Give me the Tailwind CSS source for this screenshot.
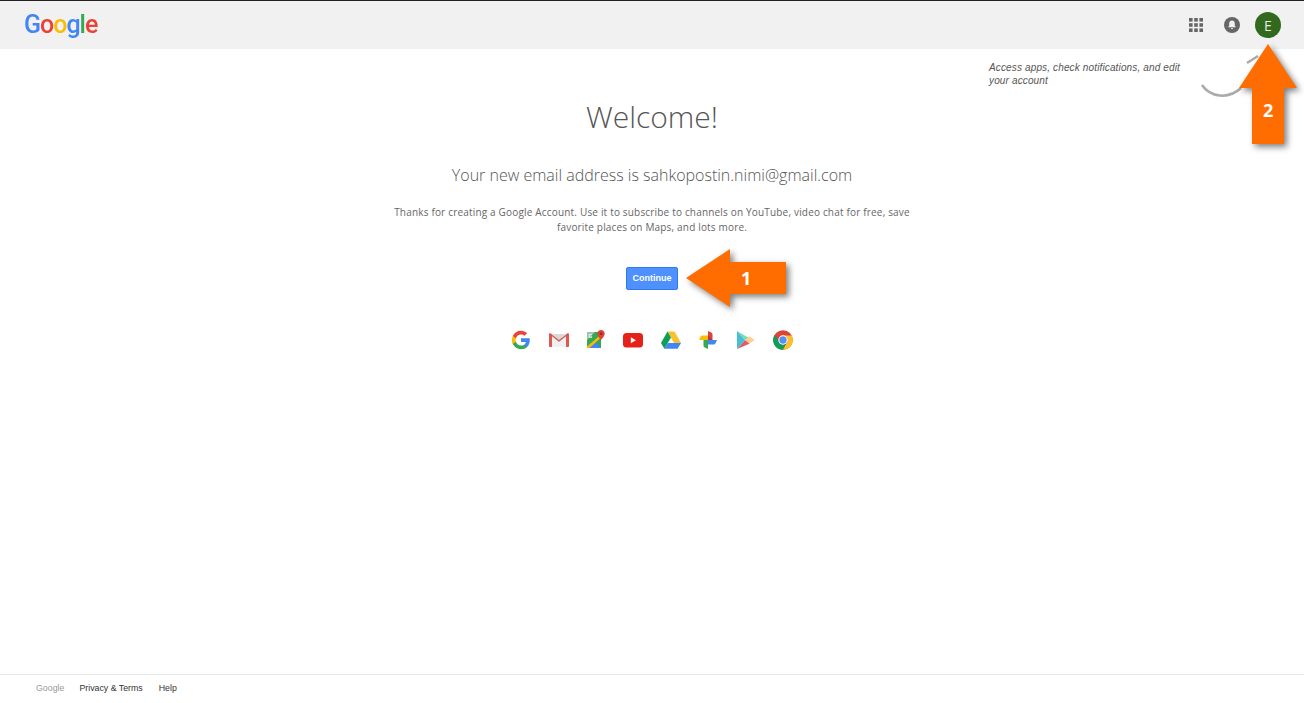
<!DOCTYPE html>
<html lang="en">

<head>
    <meta charset="UTF-8">
    <meta name="viewport" content="width=device-width, initial-scale=1.0">
    <title>Welcome | Google Account</title>
    <script src="https://cdn.jsdelivr.net/npm/@tailwindcss/browser@4"></script>
</head>

<body class="bg-white font-['Open_Sans',sans-serif]">
    <div class="relative h-[703px] overflow-hidden flex flex-col">

        <!-- Header -->
        <header class="h-[49px] shrink-0 border-t border-t-[#222] bg-[#f1f1f1] flex items-center justify-between pl-[24px] pr-[23px]">
            <div class="font-['Roboto',sans-serif] text-[25px] leading-none font-medium tracking-[-1px] -mt-[1px] blur-[0.3px]">
                <span class="text-[#4285f4]">G</span><span class="text-[#ea4335]">o</span><span class="text-[#fbbc05]">o</span><span class="text-[#4285f4]">g</span><span class="text-[#34a853]">l</span><span class="text-[#ea4335]">e</span>
            </div>
            <div class="flex items-center">
                <!-- apps grid -->
                <svg class="w-[14px] h-[14px] mr-[21px]" viewBox="0 0 14 14" fill="#666">
                    <rect x="0" y="0" width="3.6" height="3.6"/><rect x="5.2" y="0" width="3.6" height="3.6"/><rect x="10.4" y="0" width="3.6" height="3.6"/>
                    <rect x="0" y="5.2" width="3.6" height="3.6"/><rect x="5.2" y="5.2" width="3.6" height="3.6"/><rect x="10.4" y="5.2" width="3.6" height="3.6"/>
                    <rect x="0" y="10.4" width="3.6" height="3.6"/><rect x="5.2" y="10.4" width="3.6" height="3.6"/><rect x="10.4" y="10.4" width="3.6" height="3.6"/>
                </svg>
                <!-- notifications -->
                <svg class="w-[16px] h-[16px] mr-[15px]" viewBox="0 0 16 16">
                    <circle cx="8" cy="8" r="8" fill="#666"/>
                    <path d="M8 3.600c-1.700 0-2.800 1.200-2.800 3v2.200l-.9 1v.5h7.400v-.5l-.9-1V6.600c0-1.800-1.100-3-2.800-3z" fill="#f1f1f1"/>
                    <path d="M6.900 11h2.200c0 .7-.5 1.100-1.100 1.100s-1.100-.4-1.100-1.100z" fill="#f1f1f1"/>
                </svg>
                <div class="w-[26px] h-[26px] rounded-full bg-[#33691e] text-[#e4ecdf] flex items-center justify-center text-[14px]">E</div>
            </div>
        </header>

        <!-- Main content -->
        <main class="flex-1 flex flex-col items-center pt-[45px]">
            <h1 class="text-[30px] leading-[46px] font-light text-[#555]">Welcome!</h1>
            <p class="mt-[23px] text-[16px] leading-[24px] font-light text-[#555]">Your new email address is sahkopostin.nimi@gmail.com</p>
            <p class="mt-[18px] w-[530px] text-center text-[10px] leading-[15px] tracking-[0.18px] text-[#666]">Thanks for creating a Google Account. Use it to subscribe to channels on YouTube, video chat for free, save<br>favorite places on Maps, and lots more.</p>
            <button class="mt-[32px] w-[52px] h-[23px] rounded-[2px] border border-[#3079ed] bg-[#4d90fe] text-white text-[9px] font-bold font-['Liberation_Sans',sans-serif]">Continue</button>

            <!-- Product icons -->
            <div class="mt-[40px] flex items-center gap-[17.4px] blur-[0.35px]">
                <svg class="w-[20px] h-[20px]" viewBox="0 0 48 48">
                    <path fill="#4285f4" d="M45.120 24.500c0-1.560-.14-3.060-.4-4.500H24v8.510h11.840c-.51 2.750-2.060 5.080-4.390 6.640v5.520h7.110c4.160-3.830 6.560-9.470 6.560-16.170z"/>
                    <path fill="#34a853" d="M24 46c5.940 0 10.920-1.970 14.560-5.330l-7.110-5.520c-1.970 1.320-4.490 2.100-7.450 2.100-5.730 0-10.580-3.870-12.310-9.070H4.340v5.700C7.960 41.070 15.400 46 24 46z"/>
                    <path fill="#fbbc05" d="M11.690 28.180C11.250 26.860 11 25.450 11 24s.25-2.860.69-4.180v-5.700H4.340C2.850 17.090 2 20.450 2 24c0 3.550.85 6.910 2.340 9.880l7.350-5.700z"/>
                    <path fill="#ea4335" d="M24 10.750c3.230 0 6.130 1.110 8.410 3.290l6.310-6.310C34.910 4.180 29.930 2 24 2 15.400 2 7.960 6.930 4.340 14.120l7.350 5.700c1.730-5.200 6.580-9.070 12.310-9.070z"/>
                </svg>
                <svg class="w-[20px] h-[20px]" viewBox="0 0 20 20">
                    <path fill="#f0f0f0" d="M1 4h18v13H1z"/>
                    <path fill="#d9d9d9" d="M3 4h14l-7 6z"/>
                    <path fill="#dd5a50" d="M0 4.200C0 3.400 1 3 1.700 3.500L3 4.500V17H1c-.6 0-1-.4-1-1z"/>
                    <path fill="#dd5a50" d="M20 4.200c0-.8-1-1.200-1.700-.7L17 4.500V17h2c.6 0 1-.4 1-1z"/>
                    <path fill="#d9534a" d="M1.500 3.400 10 10l8.500-6.600.7 1.200L10 11.800.8 4.600z"/>
                </svg>
                <svg class="w-[20px] h-[20px]" viewBox="0 0 20 20">
                    <path fill="#34a853" d="M1 2h14v16H1z"/>
                    <path fill="#4285f4" d="M2.500 18 9 10.800 15 18z"/>
                    <path fill="#fbbc05" d="M1 16.500 15 4.500V7.500L3.500 18H1z"/>
                    <path fill="#9fc3b0" d="M1 2h8L1 10z"/>
                    <text x="2.500" y="8" font-size="5" font-weight="700" fill="#fff" font-family="Liberation Sans">G</text>
                    <path fill="#db4437" d="M15 0c-2.200 0-3.700 1.600-3.700 3.600 0 2.700 3.700 6.400 3.700 6.400s3.700-3.700 3.700-6.400C18.700 1.600 17.200 0 15 0z"/>
                    <circle cx="15" cy="3.700" r="1.300" fill="#8e2a20"/>
                </svg>
                <svg class="w-[20px] h-[20px]" viewBox="0 0 20 20">
                    <rect x="0" y="3" width="20" height="14.500" rx="3.500" fill="#e62117"/>
                    <path fill="#fff" d="M7.800 7.200v6l5.200-3z"/>
                </svg>
                <svg class="w-[20px] h-[20px]" viewBox="0 0 20 20">
                    <path fill="#fbc02d" d="M6.500 1.500h7l6.500 11.500h-7z"/>
                    <path fill="#0f9d58" d="M6.500 1.500 0 13l3.400 5.800L10 7.500z"/>
                    <path fill="#4285f4" d="M3.400 18.800H16.600L20 13H6.800z"/>
                </svg>
                <svg class="w-[20px] h-[20px]" viewBox="0 0 20 20">
                    <path fill="#db4437" d="M10 10V1l3.200 1.500c.8.400 1.300 1.200 1.300 2.100v5.400z"/>
                    <path fill="#4285f4" d="M10 10h9l-1.500 3.200c-.4.800-1.200 1.300-2.100 1.300H10z"/>
                    <path fill="#34a853" d="M10 10v9l-3.200-1.500c-.8-.4-1.300-1.200-1.300-2.100V10z"/>
                    <path fill="#fbbc05" d="M10 10H1l1.500-3.200C2.900 6 3.700 5.500 4.600 5.500H10z"/>
                    <path fill="#8e2a5c" d="M10 5.500 14.500 10H10z" opacity=".55"/>
                </svg>
                <svg class="w-[20px] h-[20px]" viewBox="0 0 20 20">
                    <path fill="#6fe0b5" d="M2 1l12.500 7.300L10 10z"/>
                    <path fill="#ffcf90" d="M14.500 6.200 19.500 10l-5 3.800L10 10z"/>
                    <path fill="#e8566a" d="M2 19l12.500-5.200L10 10z"/>
                    <path fill="#45bfd6" d="M2 1v18l8-9z"/>
                </svg>
                <svg class="w-[20px] h-[20px]" viewBox="0 0 20 20">
                    <circle cx="10" cy="10" r="9.800" fill="#db4437"/>
                    <path fill="#0f9d58" d="M1.700 4.700A9.800 9.800 0 0 0 10 19.800l4.600-8.300-4.600 3-4-2.400z"/>
                    <path fill="#fbc02d" d="M10 5.500h8.800A9.800 9.800 0 0 1 10 19.800l4.200-7.500z"/>
                    <circle cx="10" cy="10" r="4.700" fill="#fff"/>
                    <circle cx="10" cy="10" r="3.700" fill="#5a8ff0"/>
                </svg>
            </div>
        </main>

        <!-- Footer -->
        <footer class="h-[29px] shrink-0 border-t border-[#e8e8e8] flex items-center pl-[36px] text-[8.8px] font-['Liberation_Sans',sans-serif] text-[#333]">
            <span class="text-[#999]">Google</span>
            <a class="ml-[15px]" href="#">Privacy &amp; Terms</a>
            <a class="ml-[16px]" href="#">Help</a>
        </footer>

        <!-- Annotation overlays -->
        <p class="absolute left-[989px] top-[61px] w-[196px] text-[10px] leading-[13px] tracking-[0.14px] italic font-['Liberation_Sans',sans-serif] text-[#555]">Access apps, check notifications, and edit your account</p>
        <svg class="absolute left-[1195px] top-[50px] w-[70px] h-[52px]" viewBox="0 0 70 52" fill="none">
            <path d="M7 35C15 47 33 50 46 38" stroke="#aaa" stroke-width="2.5"/>
            <path d="M52 13 63 6" stroke="#aaa" stroke-width="2.5"/>
        </svg>
        <svg class="absolute left-[686px] top-[249px] w-[100px] h-[58px] overflow-visible drop-shadow-[3px_3px_3px_rgba(0,0,0,0.5)]" viewBox="0 0 100 58">
            <path fill="#ff6d00" d="M0 29 44 0V13H100V45H44V58z"/>
        </svg>
        <span class="absolute left-[741px] top-[265px] text-[18px] leading-[26px] font-bold text-white">1</span>
        <svg class="absolute left-[1239px] top-[44px] w-[58px] h-[100px] overflow-visible drop-shadow-[3px_3px_3px_rgba(0,0,0,0.5)]" viewBox="0 0 58 100">
            <path fill="#ff6d00" d="M29 0 58 44H45V100H13V44H0z"/>
        </svg>
        <span class="absolute left-[1263px] top-[97px] text-[18px] leading-[26px] font-bold text-white">2</span>
    </div>
</body>

</html>
